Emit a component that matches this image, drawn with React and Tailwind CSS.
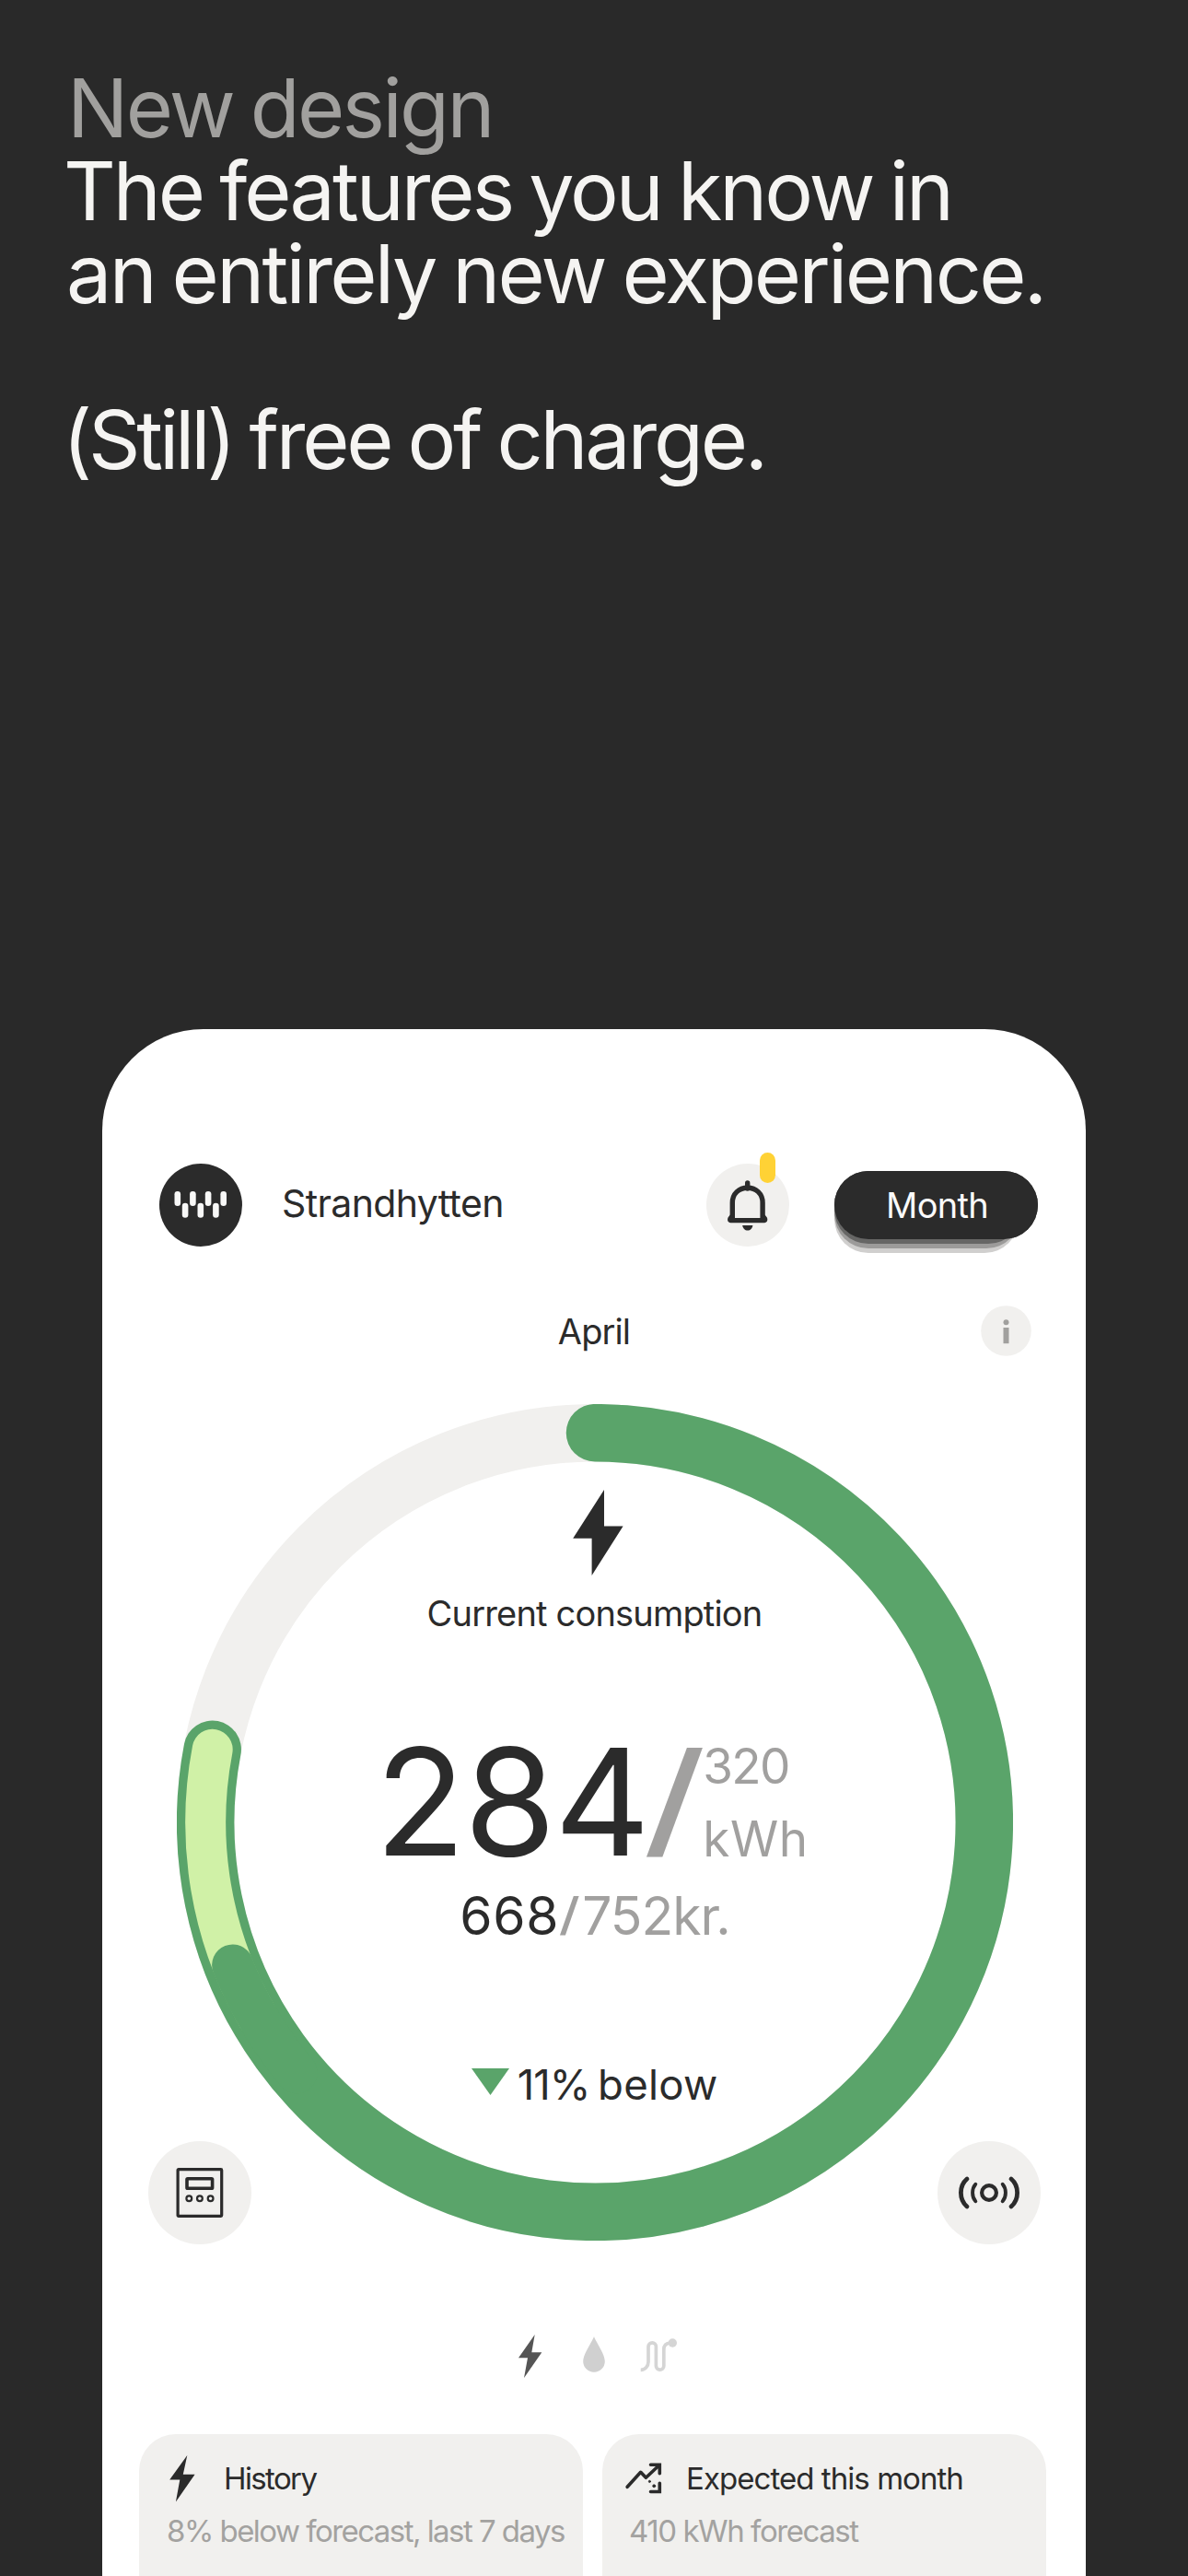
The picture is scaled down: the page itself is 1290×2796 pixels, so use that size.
import React from 'react';

const RING = { size: 908, radius: 422.8, width: 62.5 };

// Angles are clockwise degrees from the top of the ring
const arc = (from, to) => {
    const c = RING.size / 2;
    const point = (deg) => {
        const rad = ((deg - 90) * Math.PI) / 180;
        return `${(c + RING.radius * Math.cos(rad)).toFixed(2)} ${(c + RING.radius * Math.sin(rad)).toFixed(2)}`;
    };
    return `M${point(from)} A${RING.radius} ${RING.radius} 0 ${to - from > 180 ? 1 : 0} 1 ${point(to)}`;
};

const ConsumptionRing = () => (
    <svg className="absolute inset-0" width="908" height="908" viewBox="0 0 908 908" fill="none">
        <circle cx="454" cy="454" r={RING.radius} stroke="#f1f0ee" strokeWidth={RING.width} />
        <path d={arc(0, 280.8)} stroke="#5aa46a" strokeWidth={RING.width} strokeLinecap="round" />
        <path d={arc(240, 280.8)} stroke="#d0f1a7" strokeWidth="44" strokeLinecap="round" />
        <path d={arc(230, 248.5)} stroke="#5aa46a" strokeWidth="45" strokeLinecap="round" />
    </svg>
);

const Logo = () => (
    <svg width="90" height="90" viewBox="0 0 90 90">
        <circle cx="45" cy="45" r="45" fill="#2b2b2b" />
        {[16.5, 33.1, 49.8, 66.4].map(x => (
            <rect key={x} x={x} y="30" width="6.6" height="16" rx="3.3" fill="#f8f8f7" />
        ))}
        {[24.8, 41.5, 58.1].map(x => (
            <rect key={x} x={x} y="42.8" width="6.6" height="16" rx="3.3" fill="#f8f8f7" />
        ))}
    </svg>
);

const BellIcon = () => (
    <svg width="90" height="90" viewBox="0 0 90 90" fill="none">
        <path d="M28.3 60V42.5C28.3 32.5 35.5 26.2 44.7 26.2S61.1 32.5 61.1 42.5V60" stroke="#2b2b2b" strokeWidth="5.4" />
        <path d="M44.7 21V27" stroke="#2b2b2b" strokeWidth="5.4" strokeLinecap="round" />
        <path d="M25.9 55.5L23.7 58.3C22.3 61 23.3 64.2 26.3 64.2H63.1C66.1 64.2 67.1 61 65.7 58.3L63.5 55.5L60.5 59H29Z" fill="#2b2b2b" />
        <path d="M39.2 67H50.4C49.9 70.4 47.7 72.6 44.8 72.6S39.7 70.4 39.2 67Z" fill="#2b2b2b" />
    </svg>
);

const MeterIcon = () => (
    <svg width="52" height="56" viewBox="0 0 52 56" fill="none" stroke="#2b2b2b">
        <rect x="2.1" y="2.6" width="47.6" height="50.8" rx="0.8" strokeWidth="3.2" />
        <rect x="12" y="12.8" width="27.6" height="10.4" rx="0.8" strokeWidth="3.6" />
        <circle cx="14.3" cy="34.2" r="2.9" strokeWidth="2.2" />
        <circle cx="25.9" cy="34.2" r="2.9" strokeWidth="2.2" />
        <circle cx="37.6" cy="34.2" r="2.9" strokeWidth="2.2" />
    </svg>
);

const SignalIcon = () => (
    <svg width="70" height="40" viewBox="-35 -20 70 40" fill="none" stroke="#2b2b2b" strokeLinecap="round">
        <circle r="7.9" strokeWidth="4.2" />
        <path d="M-14.7 -9.3C-19 -4.5 -19 4.5 -14.7 9.3M14.7 -9.3C19 -4.5 19 4.5 14.7 9.3" strokeWidth="3.9" />
        <path d="M-24 -15C-32.8 -7.5 -32.8 7.5 -24 15M24 -15C32.8 -7.5 32.8 7.5 24 15" strokeWidth="4.8" />
    </svg>
);

const DropIcon = () => (
    <svg width="24" height="48" viewBox="0 0 24 48">
        <path d="M12 3C13.5 8 23.8 22 23.8 30A11.8 11.8 0 0 1 0.2 30C0.2 22 10.5 8 12 3Z" fill="#d0d0d0" />
    </svg>
);

const HeatIcon = () => (
    <svg width="41" height="48" viewBox="0 0 41 48" fill="none">
        <path d="M0.7 39.3C5.5 39.3 9 35.5 9 30.5V14A4.2 4.2 0 0 1 17.4 14V35A4.2 4.2 0 0 0 25.8 35V17C25.8 13 27.5 10.5 33 10" stroke="#d5d5d5" strokeWidth="3.7" />
        <circle cx="35.3" cy="10" r="4.7" fill="#d5d5d5" />
    </svg>
);

const SmallBolt = ({ className }) => (
    <svg className={className} width="28" height="51" viewBox="0 0 28 51" fill="currentColor">
        <path d="M19.3 0L14.8 20.7H27.6L6.9 50.6L11.3 26.5H0.2Z" />
    </svg>
);

const ForecastIcon = () => (
    <svg width="40" height="36" viewBox="0 0 40 36" fill="none" stroke="#2b2b2b" strokeWidth="3.6" strokeLinecap="round">
        <path d="M2.2 27.3L16.7 11.3L22.4 17.3L36 4.5" strokeLinejoin="round" />
        <path d="M27.5 3.2H37.3V12.8" />
        <path d="M37.3 23.3V32.5H27.5" />
        <path d="M33.5 3.5H37V8Z" fill="#2b2b2b" strokeWidth="1" />
        <circle cx="26.4" cy="21.4" r="1.1" fill="#2b2b2b" strokeWidth="0.8" />
        <circle cx="31.2" cy="26.3" r="1.5" fill="#2b2b2b" strokeWidth="0.8" />
    </svg>
);

const InsightCard = ({ icon, title, detail }) => (
    <div className="h-[260px] flex-1 rounded-[40px] bg-[#f1f0ee] pt-[22px]">
        <div className="flex h-[52px] items-center">
            {icon}
            {title}
        </div>
        {detail}
    </div>
);

const PhoneHeader = () => (
    <div className="flex h-[90px] items-center pl-[62px] pr-[52px]">
        <Logo />
        <div className="mb-1 ml-[43px] text-[41px] leading-[50px] tracking-[-0.0153em]">Strandhytten</div>
        <div className="relative ml-auto mr-[49px] h-[90px] w-[90px] rounded-full bg-[#f1f0ee]">
            <BellIcon />
            <div className="absolute -top-3 left-[58px] h-[33px] w-[17px] rounded-full bg-[#ffd235]" />
        </div>
        <button className="relative isolate h-[74px] w-[221px] rounded-[37px] bg-[#2b2b2b] text-[38px] leading-[74px] tracking-[-0.0184em] text-[#fafafa]">
            <span className="absolute left-0 top-[15px] -z-10 h-[74px] w-[200px] rounded-[37px] bg-[#d0cfce]" />
            <span className="absolute left-0 top-[10px] -z-10 h-[74px] w-[202px] rounded-[37px] bg-[#9c9b9a]" />
            <span className="absolute left-0 top-[5px] -z-10 h-[74px] w-[204px] rounded-[37px] bg-[#666665]" />
            <span className="absolute inset-0 rounded-[37px] bg-[#2b2b2b] pl-0.5">Month</span>
        </button>
    </div>
);

const Dial = () => (
    <div className="relative ml-[80.5px] mt-[51.5px] h-[908px] w-[908px]">
        <ConsumptionRing />
        <div className="relative flex flex-col items-center pt-[93px]">
            <svg className="ml-[7px] h-[93px] w-[55px]" viewBox="0 0 55 93" fill="#2b2b2b">
                <path d="M34 0V39.5H54.6L20.6 93V52.8H0.2Z" />
            </svg>
            <div className="mt-[18px] text-[38px] leading-[46px] tracking-[-0.0215em]">Current consumption</div>
            <div className="mr-1.5 mt-[101.5px] flex h-[161px]">
                <span className="text-[161px] leading-[161px] tracking-[-0.01em]">284</span>
                <span className="-ml-0.5 mt-[3px] w-[61px] origin-left scale-x-[1.36] font-['Liberation_Sans'] text-[161px] leading-[161px] text-[#a1a09f]">/</span>
                <div className="pt-[3px] text-[53px] leading-[79px] text-[#a1a09f]">
                    <div className="tracking-[-0.0326em]">320</div>
                    <div className="tracking-[0.0103em]">kWh</div>
                </div>
            </div>
            <div className="ml-px mt-[9px] flex h-[69px] text-[57px] leading-[69px]">
                <span className="tracking-[0.0115em]">668</span>
                <span className="ml-px mt-px w-[24px] origin-left scale-x-[1.3] font-['Liberation_Sans'] text-[#a1a09f]">/</span>
                <span className="tracking-[-0.018em] text-[#a1a09f]">752kr.</span>
            </div>
            <div className="mt-[120.5px] flex h-[56px] items-center gap-[9px] text-[45.5px] leading-[56px] tracking-[0.005em] [word-spacing:-0.1em]">
                <svg className="mb-1.5" width="41" height="29" viewBox="0 0 41 29" fill="#5aa46a">
                    <path d="M0 0H41L20.5 29Z" />
                </svg>
                <span><span className="tracking-[-0.02em]">11%</span> below</span>
            </div>
        </div>
    </div>
);

const App = () => {
    return (
        <div className="flex h-[2796px] w-[1290px] flex-col overflow-hidden bg-[#292929] font-['Inter',sans-serif]">
            <div className="h-[1117px] shrink-0 pl-[72px] pt-[72px] text-[88px] leading-[90px] text-[#f5f4f2] [word-spacing:-0.04em]">
                <div className="ml-px tracking-[-0.03em] text-[#a1a09e]">New design</div>
                <div className="-ml-[3px] tracking-[-0.0342em]">The features you know in</div>
                <div className="tracking-[-0.0305em]">an entirely new experience.</div>
                <div className="-ml-[4px] pt-[90px] tracking-[-0.0365em]">
                    <span className="tracking-[-0.047em]">(Still)</span> free of charge.
                </div>
            </div>

            {/* Phone */}
            <div className="ml-[111px] h-[1900px] w-[1068px] shrink-0 rounded-t-[110px] bg-white pt-[146px] text-[#2b2b2b]">
                <PhoneHeader />

                <div className="mt-16 grid h-[55px] grid-cols-3 items-center px-[59px]">
                    <div />
                    <div className="text-center text-[38px] leading-[46px] tracking-[-0.0236em]">April</div>
                    <svg className="justify-self-end" width="55" height="55" viewBox="0 0 55 55">
                        <circle cx="27.5" cy="27.5" r="27.3" fill="#f1f0ee" />
                        <circle cx="27.5" cy="18.2" r="3" fill="#a1a09e" />
                        <rect x="24.5" y="24" width="6" height="17.2" fill="#a1a09e" />
                    </svg>
                </div>

                <Dial />

                <div className="relative -mt-[107.5px] flex justify-between pl-[50px] pr-[49.5px]">
                    <div className="flex h-[112px] w-[112px] items-center justify-center rounded-full bg-[#f1f0ee]">
                        <MeterIcon />
                    </div>
                    <div className="flex h-[112px] w-[112px] items-center justify-center rounded-full bg-[#f1f0ee]">
                        <SignalIcon />
                    </div>
                </div>

                {/* Supply type switcher */}
                <div className="mt-[97px] flex h-12 justify-center pl-2">
                    <svg className="mr-[44px]" width="26" height="48" viewBox="0 0 26 48" fill="#555555">
                        <path d="M17.7 1L14.3 20.3H25.3L6 48L10 26.3H0Z" />
                    </svg>
                    <DropIcon />
                    <div className="ml-[38px]">
                        <HeatIcon />
                    </div>
                </div>

                <div className="mt-[61px] flex gap-[21px] pl-10 pr-[43px]">
                    <InsightCard
                        icon={<SmallBolt className="ml-[33px]" />}
                        title={<span className="ml-[31px] mt-0.5 text-[33px] tracking-[-0.049em]">History</span>}
                        detail={<div className="pl-[30px] pt-[11px] text-[33px] leading-[40px] tracking-[-0.0466em] text-[#a3a2a0]">8% below forecast, last 7 days</div>}
                    />
                    <InsightCard
                        icon={<div className="ml-[25px]"><ForecastIcon /></div>}
                        title={<span className="ml-[26px] mt-0.5 text-[33px] tracking-[-0.0286em]">Expected this month</span>}
                        detail={<div className="pl-[29px] pt-[11px] text-[33px] leading-[40px] tracking-[-0.0436em] text-[#a3a2a0]">410 kWh forecast</div>}
                    />
                </div>
            </div>
        </div>
    );
};

export default App;
